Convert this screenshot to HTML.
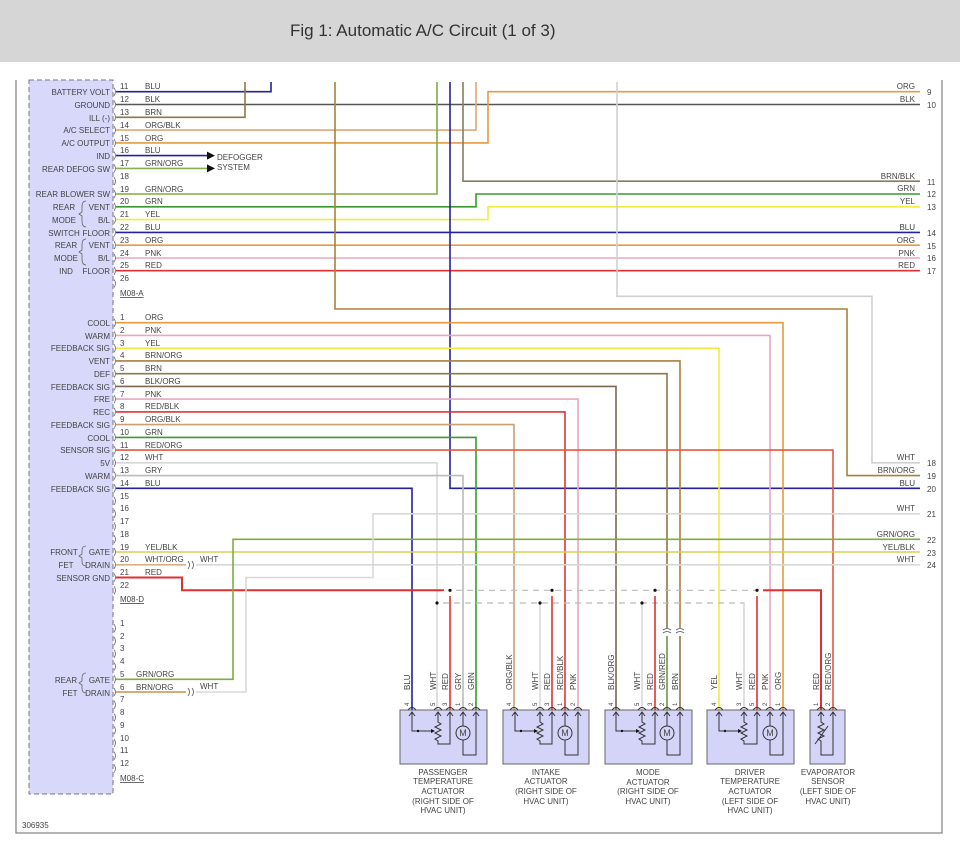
<!DOCTYPE html>
<html><head><meta charset="utf-8"><style>
html,body{margin:0;padding:0;background:#fff;}
body{width:960px;height:850px;overflow:hidden;position:relative;font-family:"Liberation Sans",sans-serif;}
#hdr{position:absolute;left:0;top:0;width:960px;height:62px;background:#d6d6d6;}
#hdr span{position:absolute;left:290px;top:21px;font-size:17px;color:#333;}
svg{position:absolute;left:0;top:0;}
svg text{font-family:"Liberation Sans",sans-serif;font-size:8px;fill:#444;}
</style></head><body>
<div id="hdr"><span>Fig 1: Automatic A/C Circuit (1 of 3)</span></div>
<svg width="960" height="850" viewBox="0 0 960 850">
<g fill="none" stroke-width="1.6">
<!-- frame -->
<polyline points="16,80 16,833 942,833 942,80" stroke="#888" stroke-width="1.3"/>
<rect x="29" y="80" width="84" height="714" fill="#d8d8fa" stroke="#777" stroke-width="1" stroke-dasharray="5,3"/>
<!-- connector A -->
<polyline points="116,91.7 271,91.7 271,82" stroke="#22229a"/>
<polyline points="116,104.5 920,104.5" stroke="#555"/>
<polyline points="116,117.3 245,117.3 245,82" stroke="#8a7a40"/>
<polyline points="116,130.1 476,130.1 476,82" stroke="#dcaa78"/>
<polyline points="116,142.9 488,142.9 488,91.7 920,91.7" stroke="#e89a40"/>
<polyline points="116,155.6 208,155.6" stroke="#22229a"/>
<polyline points="116,168.4 208,168.4" stroke="#88b050"/>
<polyline points="116,194 437,194 437,82" stroke="#80ac40"/>
<polyline points="116,206.8 476,206.8 476,194 920,194" stroke="#3a9a30"/>
<polyline points="116,219.6 488,219.6 488,206.8 920,206.8" stroke="#f0ec40"/>
<polyline points="116,232.4 920,232.4" stroke="#22229a"/>
<polyline points="116,245.2 920,245.2" stroke="#e89a40"/>
<polyline points="116,258 920,258" stroke="#e8a8c0"/>
<polyline points="116,270.7 920,270.7" stroke="#e03030"/>
<polyline points="335,82 335,309 847,309 847,475.6 920,475.6" stroke="#a8803a"/>
<polyline points="463,82 463,181.2 920,181.2" stroke="#8a7a60"/>
<polyline points="617,82 617,296.3 872,296.3 872,462.8 920,462.8" stroke="#d0d0d0"/>
<polyline points="450,82 450,488.3 920,488.3" stroke="#22229a"/>
<!-- connector D -->
<polyline points="116,322.7 783,322.7 783,710" stroke="#e89a40"/>
<polyline points="116,335.4 770,335.4 770,710" stroke="#e8a8c0"/>
<polyline points="116,348.2 719,348.2 719,710" stroke="#f0ec40"/>
<polyline points="116,360.9 680,360.9 680,628" stroke="#a8803a"/>
<polyline points="680,636 680,710" stroke="#8a7a40"/>
<polyline points="116,373.7 667,373.7 667,628" stroke="#8a7a40"/>
<polyline points="667,636 667,710" stroke="#6a9a40"/>
<polyline points="116,386.4 616,386.4 616,710" stroke="#7a6a50"/>
<polyline points="116,399.1 578,399.1 578,710" stroke="#e8a8c0"/>
<polyline points="116,411.9 565,411.9 565,710" stroke="#d83838"/>
<polyline points="116,424.6 514,424.6 514,710" stroke="#cca070"/>
<polyline points="116,437.4 476,437.4 476,710" stroke="#3a9a30"/>
<polyline points="116,450.1 833,450.1 833,710" stroke="#e05a40"/>
<polyline points="116,462.8 437,462.8 437,710" stroke="#d8d8d8"/>
<polyline points="116,475.6 463,475.6 463,710" stroke="#bbb"/>
<polyline points="116,488.3 412,488.3 412,710" stroke="#22229a"/>
<polyline points="116,552 920,552" stroke="#d8d050"/>
<polyline points="116,564.8 186,564.8" stroke="#d8b088"/>
<polyline points="196,564.8 920,564.8" stroke="#d8d8d8"/>
<polyline points="116,577.5 182,577.5 182,590.3 444,590.3" stroke="#e03030" stroke-width="2"/>
<polyline points="763,590.3 821,590.3 821,710" stroke="#e03030" stroke-width="2"/>
<polyline points="456,590.3 757,590.3" stroke="#bbb" stroke-width="1.2" stroke-dasharray="6,5"/>
<polyline points="443,603 744,603 744,710" stroke="#bbb" stroke-width="1.2" stroke-dasharray="6,5"/>
<polyline points="744,603 744,710" stroke="#d8d8d8"/>
<polyline points="450,596 450,710" stroke="#e03030"/>
<polyline points="552,596 552,710" stroke="#e03030"/>
<polyline points="655,596 655,710" stroke="#e03030"/>
<polyline points="757,596 757,710" stroke="#e03030"/>
<polyline points="540,603 540,710" stroke="#d8d8d8"/>
<polyline points="642,603 642,710" stroke="#d8d8d8"/>
<!-- connector C -->
<polyline points="116,679.3 233,679.3 233,539.3 920,539.3" stroke="#80ac40"/>
<polyline points="116,692 186,692" stroke="#c89050"/>
<polyline points="196,692 246,692 246,577.5 373,577.5 373,513.8 920,513.8" stroke="#d8d8d8"/>
<!-- (( and )) -->
<path d="M188,561 q3,4 0,8 M192,561 q3,4 0,8 M188,688 q3,4 0,8 M192,688 q3,4 0,8 M663,633 q4,-3 8,0 M663,630 q4,-3 8,0 M676,633 q4,-3 8,0 M676,630 q4,-3 8,0" stroke="#555" stroke-width="0.8"/>
</g>
<g fill="#111">
<circle cx="450" cy="590.3" r="1.6"/><circle cx="552" cy="590.3" r="1.6"/><circle cx="655" cy="590.3" r="1.6"/><circle cx="757" cy="590.3" r="1.6"/>
<circle cx="437" cy="603" r="1.6"/><circle cx="540" cy="603" r="1.6"/><circle cx="642" cy="603" r="1.6"/>
<path d="M207,151.6 l8,4 l-8,4z M207,164.4 l8,4 l-8,4z"/>
</g>
<!-- pin brackets -->
<g fill="none" stroke="#666" stroke-width="0.8">
<path d="M114,87.7 q3,4 0,8 M114,100.5 q3,4 0,8 M114,113.3 q3,4 0,8 M114,126.1 q3,4 0,8 M114,138.9 q3,4 0,8 M114,151.6 q3,4 0,8 M114,164.4 q3,4 0,8 M114,177.2 q3,4 0,8 M114,190 q3,4 0,8 M114,202.8 q3,4 0,8 M114,215.6 q3,4 0,8 M114,228.4 q3,4 0,8 M114,241.2 q3,4 0,8 M114,254 q3,4 0,8 M114,266.7 q3,4 0,8 M114,279.5 q3,4 0,8"/>
<path d="M114,318.7 q3,4 0,8 M114,331.4 q3,4 0,8 M114,344.2 q3,4 0,8 M114,356.9 q3,4 0,8 M114,369.7 q3,4 0,8 M114,382.4 q3,4 0,8 M114,395.1 q3,4 0,8 M114,407.9 q3,4 0,8 M114,420.6 q3,4 0,8 M114,433.4 q3,4 0,8 M114,446.1 q3,4 0,8 M114,458.8 q3,4 0,8 M114,471.6 q3,4 0,8 M114,484.3 q3,4 0,8 M114,497 q3,4 0,8 M114,509.8 q3,4 0,8 M114,522.5 q3,4 0,8 M114,535.3 q3,4 0,8 M114,548 q3,4 0,8 M114,560.8 q3,4 0,8 M114,573.5 q3,4 0,8 M114,586.3 q3,4 0,8"/>
<path d="M114,624.3 q3,4 0,8 M114,637 q3,4 0,8 M114,649.8 q3,4 0,8 M114,662.5 q3,4 0,8 M114,675.3 q3,4 0,8 M114,688 q3,4 0,8 M114,700.8 q3,4 0,8 M114,713.5 q3,4 0,8 M114,726.2 q3,4 0,8 M114,739 q3,4 0,8 M114,751.7 q3,4 0,8 M114,764.5 q3,4 0,8"/>
<path d="M86,201 q-4,0 -4,6 v5 l-3,2 l3,2 v5 q0,6 4,6 M86,239 q-4,0 -4,6 v5 l-3,2 l3,2 v5 q0,6 4,6 M86,546 q-4,0 -4,5 v3 l-3,2 l3,2 v3 q0,5 4,5 M86,673 q-4,0 -4,5 v3 l-3,2 l3,2 v3 q0,5 4,5"/>
</g>
<!-- boxes -->
<g stroke="#666" stroke-width="1" fill="#d4d4f8">
<rect x="400" y="710" width="87" height="54"/>
<rect x="503" y="710" width="86" height="54"/>
<rect x="605" y="710" width="87" height="54"/>
<rect x="707" y="710" width="87" height="54"/>
<rect x="810" y="710" width="35" height="54"/>
</g>
<g fill="none" stroke="#333" stroke-width="1">
<!-- passenger -->
<path d="M412,712 V731 H433 M438,712 V722 l3,2 l-6,3 l6,3 l-6,3 l6,3 l-6,3 l3,2 V744 H450 V712 M463,712 V726 M463,740 V755 H476 V712"/>
<circle cx="463" cy="733" r="7"/>
<path d="M515,712 V731 H536 M540,712 V722 l3,2 l-6,3 l6,3 l-6,3 l6,3 l-6,3 l3,2 V744 H552 V712 M565,712 V726 M565,740 V755 H578 V712"/>
<circle cx="565" cy="733" r="7"/>
<path d="M616,712 V731 H638 M642,712 V722 l3,2 l-6,3 l6,3 l-6,3 l6,3 l-6,3 l3,2 V744 H655 V712 M667,712 V726 M667,740 V755 H680 V712"/>
<circle cx="667" cy="733" r="7"/>
<path d="M719,712 V731 H740 M744,712 V722 l3,2 l-6,3 l6,3 l-6,3 l6,3 l-6,3 l3,2 V744 H757 V712 M770,712 V726 M770,740 V755 H783 V712"/>
<circle cx="770" cy="733" r="7"/>
<path d="M821,712 V722 l3,2 l-6,3 l6,3 l-6,3 l6,3 l-6,3 l3,2 V755 H833 V712 M815,744 L828,726"/>
<!-- arrows at top -->
<path d="M409,716 l3,-4 l3,4 M435,716 l3,-4 l3,4 M447,716 l3,-4 l3,4 M460,716 l3,-4 l3,4 M473,716 l3,-4 l3,4 M512,716 l3,-4 l3,4 M537,716 l3,-4 l3,4 M549,716 l3,-4 l3,4 M562,716 l3,-4 l3,4 M575,716 l3,-4 l3,4 M613,716 l3,-4 l3,4 M639,716 l3,-4 l3,4 M652,716 l3,-4 l3,4 M664,716 l3,-4 l3,4 M677,716 l3,-4 l3,4 M716,716 l3,-4 l3,4 M741,716 l3,-4 l3,4 M754,716 l3,-4 l3,4 M767,716 l3,-4 l3,4 M780,716 l3,-4 l3,4 M818,716 l3,-4 l3,4 M830,716 l3,-4 l3,4"/>
<path d="M408,710 q4,-5 8,0 M434,710 q4,-5 8,0 M446,710 q4,-5 8,0 M459,710 q4,-5 8,0 M472,710 q4,-5 8,0 M510,710 q4,-5 8,0 M536,710 q4,-5 8,0 M548,710 q4,-5 8,0 M561,710 q4,-5 8,0 M574,710 q4,-5 8,0 M612,710 q4,-5 8,0 M638,710 q4,-5 8,0 M651,710 q4,-5 8,0 M663,710 q4,-5 8,0 M676,710 q4,-5 8,0 M715,710 q4,-5 8,0 M740,710 q4,-5 8,0 M753,710 q4,-5 8,0 M766,710 q4,-5 8,0 M779,710 q4,-5 8,0 M817,710 q4,-5 8,0 M829,710 q4,-5 8,0"/>
</g>
<g fill="#111">
<path d="M431,729 l4,2 l-4,2z M534,729 l4,2 l-4,2z M636,729 l4,2 l-4,2z M738,729 l4,2 l-4,2z"/>
<circle cx="418" cy="731" r="1.2"/><circle cx="521" cy="731" r="1.2"/><circle cx="622" cy="731" r="1.2"/><circle cx="725" cy="731" r="1.2"/>
</g>
<g font-size="9" text-anchor="middle">
<text x="463" y="736" style="font-size:9px">M</text><text x="565" y="736" style="font-size:9px">M</text><text x="667" y="736" style="font-size:9px">M</text><text x="770" y="736" style="font-size:9px">M</text>
</g>
<!-- left labels -->
<g text-anchor="end">
<text x="110" y="95">BATTERY VOLT</text><text x="110" y="108">GROUND</text><text x="110" y="121">ILL (-)</text><text x="110" y="133">A/C SELECT</text><text x="110" y="146">A/C OUTPUT</text><text x="110" y="159">IND</text><text x="110" y="172">REAR DEFOG SW</text><text x="110" y="197">REAR BLOWER SW</text><text x="110" y="210">VENT</text><text x="110" y="223">B/L</text><text x="110" y="236">FLOOR</text><text x="110" y="248">VENT</text><text x="110" y="261">B/L</text><text x="110" y="274">FLOOR</text>
<text x="110" y="326">COOL</text><text x="110" y="339">WARM</text><text x="110" y="351">FEEDBACK SIG</text><text x="110" y="364">VENT</text><text x="110" y="377">DEF</text><text x="110" y="390">FEEDBACK SIG</text><text x="110" y="402">FRE</text><text x="110" y="415">REC</text><text x="110" y="428">FEEDBACK SIG</text><text x="110" y="441">COOL</text><text x="110" y="453">SENSOR SIG</text><text x="110" y="466">5V</text><text x="110" y="479">WARM</text><text x="110" y="492">FEEDBACK SIG</text><text x="110" y="555">GATE</text><text x="110" y="568">DRAIN</text><text x="110" y="581">SENSOR GND</text>
<text x="110" y="683">GATE</text><text x="110" y="696">DRAIN</text>
</g>
<g text-anchor="middle">
<text x="64" y="210">REAR</text><text x="64" y="223">MODE</text><text x="64" y="236">SWITCH</text>
<text x="66" y="248">REAR</text><text x="66" y="261">MODE</text><text x="66" y="274">IND</text>
<text x="64" y="555">FRONT</text><text x="66" y="568">FET</text>
<text x="66" y="683">REAR</text><text x="70" y="696">FET</text>
</g>
<!-- pin numbers -->
<g>
<text x="120" y="89">11</text><text x="120" y="102">12</text><text x="120" y="115">13</text><text x="120" y="128">14</text><text x="120" y="141">15</text><text x="120" y="153">16</text><text x="120" y="166">17</text><text x="120" y="179">18</text><text x="120" y="192">19</text><text x="120" y="204">20</text><text x="120" y="217">21</text><text x="120" y="230">22</text><text x="120" y="243">23</text><text x="120" y="256">24</text><text x="120" y="268">25</text><text x="120" y="281">26</text>
<text x="120" y="320">1</text><text x="120" y="333">2</text><text x="120" y="346">3</text><text x="120" y="358">4</text><text x="120" y="371">5</text><text x="120" y="384">6</text><text x="120" y="397">7</text><text x="120" y="409">8</text><text x="120" y="422">9</text><text x="120" y="435">10</text><text x="120" y="448">11</text><text x="120" y="460">12</text><text x="120" y="473">13</text><text x="120" y="486">14</text><text x="120" y="499">15</text><text x="120" y="511">16</text><text x="120" y="524">17</text><text x="120" y="537">18</text><text x="120" y="550">19</text><text x="120" y="562">20</text><text x="120" y="575">21</text><text x="120" y="588">22</text>
<text x="120" y="626">1</text><text x="120" y="639">2</text><text x="120" y="651">3</text><text x="120" y="664">4</text><text x="120" y="677">5</text><text x="120" y="690">6</text><text x="120" y="702">7</text><text x="120" y="715">8</text><text x="120" y="728">9</text><text x="120" y="741">10</text><text x="120" y="753">11</text><text x="120" y="766">12</text>
<text x="120" y="296" text-decoration="underline">M08-A</text><text x="120" y="602" text-decoration="underline">M08-D</text><text x="120" y="781" text-decoration="underline">M08-C</text>
<text x="22" y="828">306935</text>
<text x="217" y="160">DEFOGGER</text><text x="217" y="170">SYSTEM</text>
<text x="200" y="562">WHT</text><text x="200" y="689">WHT</text>
</g>
<!-- wire color labels -->
<g>
<text x="145" y="89">BLU</text><text x="145" y="102">BLK</text><text x="145" y="115">BRN</text><text x="145" y="128">ORG/BLK</text><text x="145" y="141">ORG</text><text x="145" y="153">BLU</text><text x="145" y="166">GRN/ORG</text><text x="145" y="192">GRN/ORG</text><text x="145" y="204">GRN</text><text x="145" y="217">YEL</text><text x="145" y="230">BLU</text><text x="145" y="243">ORG</text><text x="145" y="256">PNK</text><text x="145" y="268">RED</text>
<text x="145" y="320">ORG</text><text x="145" y="333">PNK</text><text x="145" y="346">YEL</text><text x="145" y="358">BRN/ORG</text><text x="145" y="371">BRN</text><text x="145" y="384">BLK/ORG</text><text x="145" y="397">PNK</text><text x="145" y="409">RED/BLK</text><text x="145" y="422">ORG/BLK</text><text x="145" y="435">GRN</text><text x="145" y="448">RED/ORG</text><text x="145" y="460">WHT</text><text x="145" y="473">GRY</text><text x="145" y="486">BLU</text><text x="145" y="550">YEL/BLK</text><text x="145" y="562">WHT/ORG</text><text x="145" y="575">RED</text>
<text x="136" y="677">GRN/ORG</text><text x="136" y="690">BRN/ORG</text>
</g>
<g text-anchor="end">
<text x="915" y="89">ORG</text><text x="915" y="102">BLK</text><text x="915" y="179">BRN/BLK</text><text x="915" y="191">GRN</text><text x="915" y="204">YEL</text><text x="915" y="230">BLU</text><text x="915" y="243">ORG</text><text x="915" y="256">PNK</text><text x="915" y="268">RED</text>
<text x="915" y="460">WHT</text><text x="915" y="473">BRN/ORG</text><text x="915" y="486">BLU</text><text x="915" y="511">WHT</text><text x="915" y="537">GRN/ORG</text><text x="915" y="550">YEL/BLK</text><text x="915" y="562">WHT</text>
</g>
<g>
<text x="927" y="95">9</text><text x="927" y="108">10</text><text x="927" y="185">11</text><text x="927" y="197">12</text><text x="927" y="210">13</text><text x="927" y="236">14</text><text x="927" y="249">15</text><text x="927" y="261">16</text><text x="927" y="274">17</text>
<text x="927" y="466">18</text><text x="927" y="479">19</text><text x="927" y="492">20</text><text x="927" y="517">21</text><text x="927" y="543">22</text><text x="927" y="556">23</text><text x="927" y="568">24</text>
</g>
<!-- rotated labels above boxes -->
<g>
<text transform="translate(410,690) rotate(-90)">BLU</text><text transform="translate(436,690) rotate(-90)">WHT</text><text transform="translate(448,690) rotate(-90)">RED</text><text transform="translate(461,690) rotate(-90)">GRY</text><text transform="translate(474,690) rotate(-90)">GRN</text>
<text transform="translate(512,690) rotate(-90)">ORG/BLK</text><text transform="translate(538,690) rotate(-90)">WHT</text><text transform="translate(550,690) rotate(-90)">RED</text><text transform="translate(563,690) rotate(-90)">RED/BLK</text><text transform="translate(576,690) rotate(-90)">PNK</text>
<text transform="translate(614,690) rotate(-90)">BLK/ORG</text><text transform="translate(640,690) rotate(-90)">WHT</text><text transform="translate(653,690) rotate(-90)">RED</text><text transform="translate(665,690) rotate(-90)">GRN/RED</text><text transform="translate(678,690) rotate(-90)">BRN</text>
<text transform="translate(717,690) rotate(-90)">YEL</text><text transform="translate(742,690) rotate(-90)">WHT</text><text transform="translate(755,690) rotate(-90)">RED</text><text transform="translate(768,690) rotate(-90)">PNK</text><text transform="translate(781,690) rotate(-90)">ORG</text>
<text transform="translate(819,690) rotate(-90)">RED</text><text transform="translate(831,690) rotate(-90)">RED/ORG</text>
</g>
<g style="font-size:6px">
<text transform="translate(409,706) rotate(-90)" style="font-size:6px">4</text><text transform="translate(435,706) rotate(-90)" style="font-size:6px">5</text><text transform="translate(447,706) rotate(-90)" style="font-size:6px">3</text><text transform="translate(460,706) rotate(-90)" style="font-size:6px">1</text><text transform="translate(473,706) rotate(-90)" style="font-size:6px">2</text>
<text transform="translate(511,706) rotate(-90)" style="font-size:6px">4</text><text transform="translate(537,706) rotate(-90)" style="font-size:6px">5</text><text transform="translate(549,706) rotate(-90)" style="font-size:6px">3</text><text transform="translate(562,706) rotate(-90)" style="font-size:6px">1</text><text transform="translate(575,706) rotate(-90)" style="font-size:6px">2</text>
<text transform="translate(613,706) rotate(-90)" style="font-size:6px">4</text><text transform="translate(639,706) rotate(-90)" style="font-size:6px">5</text><text transform="translate(652,706) rotate(-90)" style="font-size:6px">3</text><text transform="translate(664,706) rotate(-90)" style="font-size:6px">2</text><text transform="translate(677,706) rotate(-90)" style="font-size:6px">1</text>
<text transform="translate(716,706) rotate(-90)" style="font-size:6px">4</text><text transform="translate(741,706) rotate(-90)" style="font-size:6px">3</text><text transform="translate(754,706) rotate(-90)" style="font-size:6px">5</text><text transform="translate(767,706) rotate(-90)" style="font-size:6px">2</text><text transform="translate(780,706) rotate(-90)" style="font-size:6px">1</text>
<text transform="translate(818,706) rotate(-90)" style="font-size:6px">1</text><text transform="translate(830,706) rotate(-90)" style="font-size:6px">2</text>
</g>
<!-- captions -->
<g text-anchor="middle">
<text x="443" y="775">PASSENGER</text><text x="443" y="784">TEMPERATURE</text><text x="443" y="794">ACTUATOR</text><text x="443" y="804">(RIGHT SIDE OF</text><text x="443" y="813">HVAC UNIT)</text>
<text x="546" y="775">INTAKE</text><text x="546" y="784">ACTUATOR</text><text x="546" y="794">(RIGHT SIDE OF</text><text x="546" y="804">HVAC UNIT)</text>
<text x="648" y="775">MODE</text><text x="648" y="785">ACTUATOR</text><text x="648" y="794">(RIGHT SIDE OF</text><text x="648" y="804">HVAC UNIT)</text>
<text x="750" y="775">DRIVER</text><text x="750" y="784">TEMPERATURE</text><text x="750" y="794">ACTUATOR</text><text x="750" y="804">(LEFT SIDE OF</text><text x="750" y="813">HVAC UNIT)</text>
<text x="828" y="775">EVAPORATOR</text><text x="828" y="784">SENSOR</text><text x="828" y="794">(LEFT SIDE OF</text><text x="828" y="804">HVAC UNIT)</text>
</g>
</svg>
</body></html>
